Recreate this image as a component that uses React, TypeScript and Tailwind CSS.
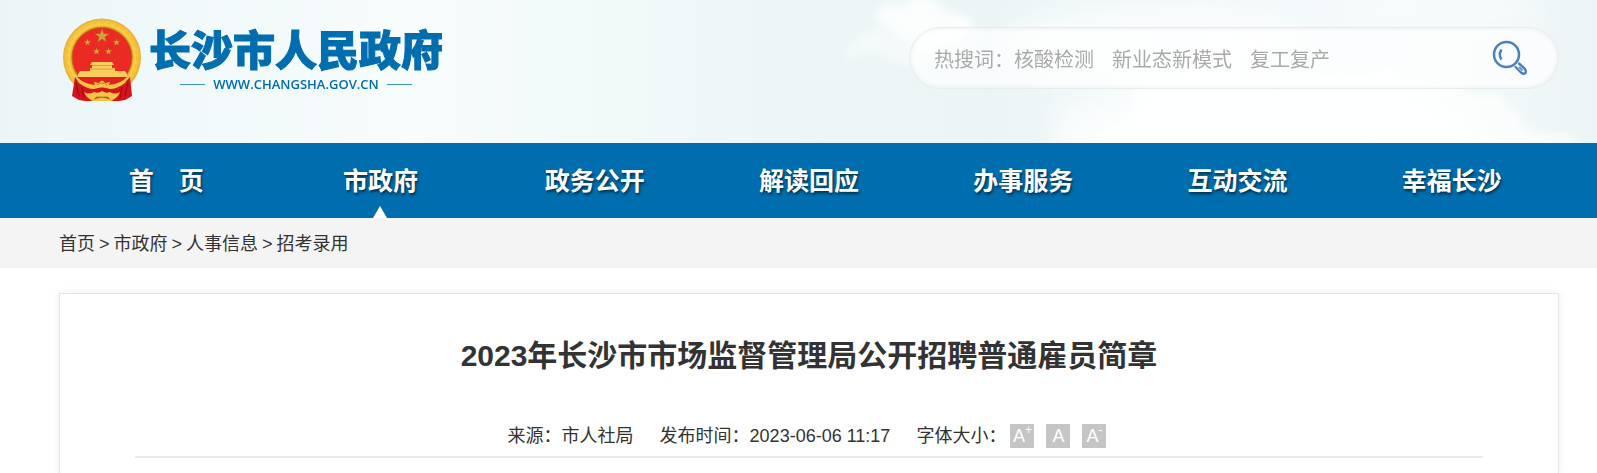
import { useState } from "react";

const NAV_ITEMS = ["首\u3000页", "市政府", "政务公开", "解读回应", "办事服务", "互动交流", "幸福长沙"];
const ACTIVE_NAV = "市政府";

const CRUMBS = ["首页", "市政府", "人事信息", "招考录用"];

const HOT_WORDS = ["核酸检测", "新业态新模式", "复工复产"];

const FONT_SIZES = [
  { sign: "+", label: "放大字体", size: "large" },
  { sign: "", label: "默认字体", size: "normal" },
  { sign: "-", label: "缩小字体", size: "small" },
];

const STAR = "M0 -1 L0.24 -0.31 L0.95 -0.31 L0.38 0.12 L0.59 0.81 L0 0.4 L-0.59 0.81 L-0.38 0.12 L-0.95 -0.31 L-0.24 -0.31 Z";

function Emblem() {
  return (
    <svg viewBox="0 0 78 84" className="h-[84px] w-[78px] shrink-0" aria-hidden="true">
      <defs>
        <radialGradient id="gold" cx="50%" cy="50%" r="50%">
          <stop offset="0.76" stopColor="#d99a28" />
          <stop offset="0.84" stopColor="#fbcf45" />
          <stop offset="0.93" stopColor="#f3c238" />
          <stop offset="1" stopColor="#e3ad3a" />
        </radialGradient>
      </defs>
      <circle cx="39" cy="39.5" r="39" fill="url(#gold)" />
      <circle cx="39" cy="39.5" r="34.5" fill="none" stroke="#dfa12c" strokeWidth="1" strokeDasharray="3 4" opacity="0.4" />
      <circle cx="39" cy="39.5" r="30" fill="#ec2a24" stroke="#b9701b" strokeWidth="1" />
      <g fill="#d6a13a" stroke="#a8641c" strokeWidth="0.06">
        <path d={STAR} transform="translate(39 18) scale(7.5)" />
        <path d={STAR} transform="translate(24.5 24.5) scale(3.8)" />
        <path d={STAR} transform="translate(53.5 24.5) scale(3.8)" />
        <path d={STAR} transform="translate(33.5 33.5) scale(3.8)" />
        <path d={STAR} transform="translate(45.5 33.5) scale(3.8)" />
      </g>
      <path d="M29 44 H49 L51 47 H49 V50 H52 V53 H62 L64 56 V59 H15 V56 L17 53 H27 V50 H29 V47 H27 Z" fill="#f8ce5f" />
      <path d="M29 47.5 H49 M27 51 H52" stroke="#dd8c2b" strokeWidth="0.8" />
      <path d="M12 59 Q17 66 27 70 H51 Q61 66 67 59 L69 78 L62 82 L56 83 H22 L16 82 L9 78 Z" fill="#d5141b" />
      <path d="M13 65 L16 78 M19 69 L21 80 M65 65 L62 78 M59 69 L57 80" stroke="#a50d12" strokeWidth="1.3" fill="none" />
      <path d="M14 59 H64 L55 67 H23 Z" fill="#e3211f" />
      <path d="M11 57 Q20 66 32 67 L31 64 L36 65 Q39 60 42 65 L47 64 L46 67 Q58 66 67 57 L62 65 Q54 71 47 71 L39 69 L31 71 Q24 71 16 65 Z" fill="#f5c544" />
      <path d="M21 74 Q26 77 31 74 Q35 76 39 73 Q43 76 47 74 Q52 77 57 74 Q55 80 48 83 L45 79 H33 L30 83 Q23 80 21 74 Z" fill="#f5c544" />
      <path d="M28 83 Q39 76 50 83 Z" fill="#f5c544" />
      <path d="M34 67 Q39 63 44 67 M33 79 H45" stroke="#c9851f" strokeWidth="1" fill="none" />
    </svg>
  );
}

function Clouds() {
  return (
    <svg
      viewBox="0 0 1597 143"
      preserveAspectRatio="none"
      className="absolute inset-0 h-full w-full"
      aria-hidden="true"
    >
      <defs>
        <linearGradient id="sky" x1="0" x2="1" y1="0" y2="0">
          <stop offset="0" stopColor="#ebf5f7" />
          <stop offset="0.12" stopColor="#f1f9fa" />
          <stop offset="0.26" stopColor="#f7fcfc" />
          <stop offset="0.38" stopColor="#f1f9f9" />
          <stop offset="0.5" stopColor="#ecf5f7" />
          <stop offset="0.62" stopColor="#ebf5f6" />
          <stop offset="0.8" stopColor="#f4fafb" />
          <stop offset="0.94" stopColor="#f1f8f9" />
          <stop offset="1" stopColor="#ebf4f6" />
        </linearGradient>
        <filter id="soft" x="-30%" y="-50%" width="160%" height="200%">
          <feGaussianBlur stdDeviation="14" />
        </filter>
        <filter id="edge" x="-30%" y="-50%" width="160%" height="200%">
          <feTurbulence type="fractalNoise" baseFrequency="0.02" numOctaves="4" seed="3" result="noise" />
          <feDisplacementMap in="SourceGraphic" in2="noise" scale="50" xChannelSelector="R" yChannelSelector="G" />
          <feGaussianBlur stdDeviation="5" />
        </filter>
      </defs>
      <rect width="1597" height="143" fill="url(#sky)" />
      <g fill="#ffffff" filter="url(#soft)">
        <ellipse cx="1150" cy="45" rx="150" ry="40" opacity="0.6" />
        <path d="M1060 105 L1200 80 L1400 80 L1460 110 L1500 170 H1050 Z" opacity="0.7" />
        <ellipse cx="1440" cy="10" rx="110" ry="20" opacity="0.4" />
      </g>
      <g fill="#ffffff" filter="url(#edge)">
        <ellipse cx="925" cy="25" rx="42" ry="20" opacity="0.8" />
        <ellipse cx="880" cy="52" rx="36" ry="12" opacity="0.45" />
        <path d="M1130 80 L1460 75 L1500 95 L1520 120 L1570 160 H1070 Z" opacity="0.7" />
      </g>
    </svg>
  );
}

function SearchIcon() {
  return (
    <svg viewBox="0 0 36 36" className="h-9 w-9" fill="none" stroke="#4a80c4" aria-hidden="true">
      <circle cx="14.5" cy="14.5" r="12.5" strokeWidth="2.5" />
      <path d="M9.5 9.5 Q6 14.5 9.5 19.5" strokeWidth="2.5" />
      <path
        d="M23.5 27 L29.5 33 Q31.5 34.5 33.5 33 Q34.5 31 33 29 L27 23.5"
        strokeWidth="2.4"
        strokeLinecap="round"
        strokeLinejoin="round"
      />
      <path d="M27 27 L30.5 30.5" strokeWidth="1.6" />
    </svg>
  );
}

function Header() {
  return (
    <header className="relative h-[143px]">
      <Clouds />
      <div className="relative flex items-start justify-between pl-[63px] pr-[38px]">
        <a href="#" className="flex items-start gap-2 pt-[18px] text-[#006eae]">
          <Emblem />
          <span className="flex flex-col items-center pt-3">
            <span className="text-[42px] font-black leading-[44px] [-webkit-text-stroke:1px_#006eae]">长沙市人民政府</span>
            <span className="flex items-center gap-2 text-[13px] leading-5">
              <span className="h-px w-[25px] bg-[#3f93c4]" />
              <span className="font-['Open_Sans',sans-serif] font-semibold">WWW.CHANGSHA.GOV.CN</span>
              <span className="h-px w-[25px] bg-[#3f93c4]" />
            </span>
          </span>
        </a>
        <form
          onSubmit={(e) => e.preventDefault()}
          className="mt-[27px] flex h-[62px] w-[650px] items-center rounded-full border border-[#e6ebeb] bg-white/70 pl-6 pr-[30px] text-xl text-[#aaaaaa] shadow-[inset_0_0_5px_rgba(0,0,0,0.08)]"
        >
          <label htmlFor="keyword" className="pt-[3px]">热搜词：</label>
          <span className="flex gap-[18px] pt-[3px]">
            {HOT_WORDS.map((word) => (
              <a key={word} href="#">{word}</a>
            ))}
          </span>
          <input id="keyword" type="text" className="min-w-0 flex-1 bg-transparent px-2 outline-none" />
          <button type="submit" aria-label="搜索">
            <SearchIcon />
          </button>
        </form>
      </div>
    </header>
  );
}

function NavBar() {
  return (
    <nav className="bg-[#006eae] pl-[59px] pr-[38px]">
      <ul className="grid grid-cols-7">
        {NAV_ITEMS.map((item) => (
          <li key={item} className="relative text-center">
            <a
              href="#"
              className="block pt-[2px] text-[25px] font-bold leading-[73px] text-white [text-shadow:1px_2px_3px_rgba(0,0,0,0.6)]"
            >
              {item}
            </a>
            {item === ACTIVE_NAV && (
              <span className="absolute bottom-0 left-1/2 -translate-x-1/2 border-x-[7px] border-b-[12px] border-x-transparent border-b-white" />
            )}
          </li>
        ))}
      </ul>
    </nav>
  );
}

export default function App() {
  const [fontSize, setFontSize] = useState("normal");

  return (
    <div className="min-h-screen bg-white font-['Liberation_Sans','Noto_Sans_CJK_SC',sans-serif] text-[#333333]" lang="zh-CN">
      <Header />
      <NavBar />

      {/* Breadcrumb */}
      <div className="flex h-[50px] items-center gap-1 bg-[#f4f4f4] pl-[59px] pt-[2px] text-lg">
        {CRUMBS.map((crumb, i) => (
          <span key={crumb} className="flex gap-1">
            {i > 0 && <span>&gt;</span>}
            <a href="#">{crumb}</a>
          </span>
        ))}
      </div>

      {/* Article */}
      <main className="pl-[59px] pr-[38px] pt-[25px]">
        <article
          className="min-h-[180px] border border-b-0 border-[#e4e6e6] px-[75px] shadow-[0_0_8px_rgba(0,0,0,0.08)]"
          data-font-size={fontSize}
        >
          <h1 className="pt-[38px] text-center text-[30px] font-bold leading-[48px]">
            2023年长沙市市场监督管理局公开招聘普通雇员简章
          </h1>
          <div className="mt-10 flex items-center justify-center gap-[26px] border-b-2 border-[#e9e9e9] pb-1 pr-1 text-lg leading-8">
            <span>来源：市人社局</span>
            <span>发布时间：2023-06-06 11:17</span>
            <div className="flex items-center gap-1">
              <span>字体大小：</span>
              <span className="flex gap-3">
                {FONT_SIZES.map(({ sign, label, size }) => (
                  <button
                    key={size}
                    aria-label={label}
                    onClick={() => setFontSize(size)}
                    className="flex h-6 w-6 items-center justify-center bg-[#c5c5c5] text-lg leading-6 text-white"
                  >
                    A{sign && <sup className="-top-[6px] text-xs leading-none">{sign}</sup>}
                  </button>
                ))}
              </span>
            </div>
          </div>
        </article>
      </main>
    </div>
  );
}
